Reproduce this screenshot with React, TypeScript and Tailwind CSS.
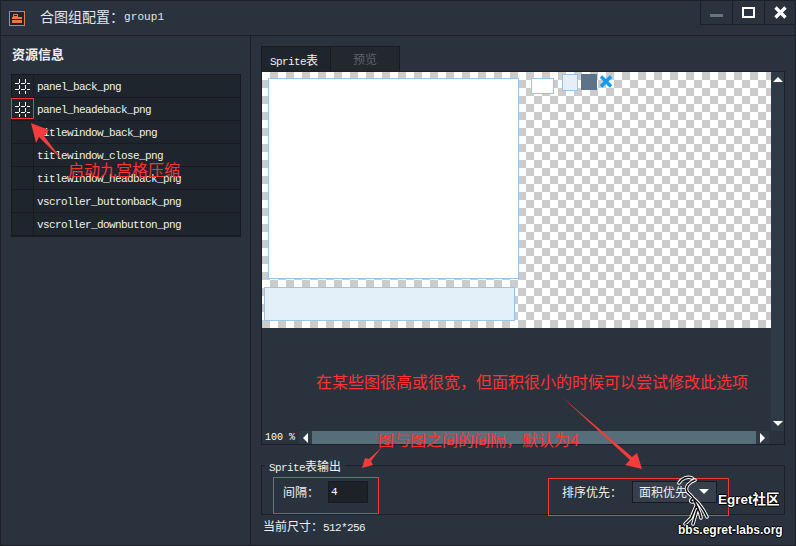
const mono = "font-['Liberation_Mono','Noto_Sans_CJK_SC',monospace]";
const cjk = "font-['Noto_Sans_CJK_SC','Liberation_Sans',sans-serif]";

const rows = [
  { name: "panel_back_png", grid: true },
  { name: "panel_headeback_png", grid: true },
  { name: "titlewindow_back_png" },
  { name: "titlewindow_close_png" },
  { name: "titlewindow_headback_png" },
  { name: "vscroller_buttonback_png" },
  { name: "vscroller_downbutton_png" },
];

function GridIcon() {
  return (
    <svg width="15" height="15" viewBox="0 0 15 15" stroke="#fff" strokeWidth="1" fill="none" shapeRendering="crispEdges">
      <path d="M0 4.5H3.5M5.5 4.5H9.5M11.5 4.5H15M0 10.5H3.5M5.5 10.5H9.5M11.5 10.5H15M4.5 0V3.5M4.5 5.5V9.5M4.5 11.5V15M10.5 0V3.5M10.5 5.5V9.5M10.5 11.5V15" />
    </svg>
  );
}

function AssetRow({ name, grid }: { name: string; grid?: boolean }) {
  return (
    <div className="flex h-[23px] border-b border-[#171b21] bg-[#1f252d]">
      <div className="w-[22px] border-r border-[#171b21] flex items-center justify-center shrink-0">
        {grid && <GridIcon />}
      </div>
      <div className={`${mono} pl-[3px] text-[11px] tracking-[-0.6px] leading-[24px] text-[#f0f0f0]`}>{name}</div>
    </div>
  );
}

function TitleBar() {
  return (
    <div className="h-[35px] flex border-b border-[#1b2027] shrink-0">
      <div className="shrink-0 ml-[8px] mt-[10px]">
        <svg width="16" height="15" viewBox="0 0 16 15" fill="none">
          <rect x="0.5" y="0.5" width="15" height="14" stroke="#e8793f" fill="#1d2430" />
          <path d="M4 3H9V6H13V12H3V6H4Z" fill="#e8793f" />
          <rect x="5" y="4" width="3" height="1" fill="#1d2430" />
          <rect x="3" y="8" width="10" height="1" fill="#1d2430" />
        </svg>
      </div>
      <div className={`${cjk} ml-[15px] mt-[6px] text-[14px] leading-[18px] text-[#e4e6e8]`}>合图组配置：</div>
      <div className={`${mono} mt-[7px] text-[11px] tracking-[0.1px] leading-[18px] text-[#e4e6e8]`}>group1</div>
      <div className="ml-auto flex h-[24px]">
        <div className="w-[33px] border border-t-0 border-[#1b2027] flex items-center justify-center">
          <div className="w-[13px] h-[3px] mt-[5px] bg-[#6a727b]" />
        </div>
        <div className="w-[32px] border-b border-r border-[#1b2027] flex items-center justify-center">
          <div className="w-[13px] h-[11px] border-2 border-white" />
        </div>
        <div className="w-[30px] border-b border-[#1b2027] flex items-center justify-center">
          <svg width="13" height="13" viewBox="0 0 13 13" stroke="#fff" strokeWidth="3.2">
            <path d="M1.5 1.5L11.5 11.5M11.5 1.5L1.5 11.5" />
          </svg>
        </div>
      </div>
    </div>
  );
}

function LeftPanel() {
  return (
    <div className="w-[250px] shrink-0 border-r border-[#1b2027] pl-[10px] pr-[9px]">
      <div className={`${cjk} mt-[9px] ml-[1px] h-[29px] text-[13px] font-bold leading-[18px] text-[#f0f0f0]`}>资源信息</div>
      <div className="border border-[#171b21]">
        {rows.map((r) => (
          <AssetRow key={r.name} name={r.name} grid={r.grid} />
        ))}
      </div>
    </div>
  );
}

function SpriteCanvas() {
  return (
    <div className="relative h-[256px] bg-[#fff] bg-[repeating-conic-gradient(#cccccc_0_25%,#ffffff_0_50%)] bg-[length:16px_16px] overflow-hidden">
      <div className="absolute left-[6px] top-[6px] w-[251px] h-[201px] bg-white border border-[#9cc3e5]" />
      <div className="absolute left-[2px] top-[215px] w-[251px] h-[34px] bg-[#e3eff9] border border-[#9cc3e5]" />
      <div className="absolute left-[269px] top-[6px] w-[23px] h-[16px] bg-white border border-[#9cc3e5]" />
      <div className="absolute left-[300px] top-[2px] w-[16px] h-[17px] bg-[#e3eff9] border border-[#9cc3e5]" />
      <div className="absolute left-[319px] top-[2px] w-[16px] h-[16px] bg-[#5d7389]" />
      <svg className="absolute left-[337px] top-[3px]" width="14" height="13" viewBox="0 0 14 13" stroke="#0f9bf5" strokeWidth="3.4">
        <path d="M2 1.5L12 11.5M12 1.5L2 11.5" />
      </svg>
    </div>
  );
}

function SpriteLabel({ suffix }: { suffix: string }) {
  return (
    <>
      <span className={`${mono} text-[11px] tracking-[-0.6px]`}>Sprite</span>
      <span className={`${cjk} text-[12px]`}>{suffix}</span>
    </>
  );
}

function RightPanel() {
  return (
    <div className="flex-1 pl-[10px] pr-[10px]">
      <div className="mt-[10px] flex h-[25px]">
        <div className="w-[70px] pl-[8px] bg-[#1f252d] border border-b-0 border-[#171b21] leading-[24px] text-[#f0f0f0]">
          <SpriteLabel suffix="表" />
        </div>
        <div className={`${cjk} w-[69px] bg-[#23282f] border-t border-r border-[#171b21] text-[12px] leading-[24px] text-center text-[#5e6368]`}>预览</div>
      </div>
      <div className="w-[524px] h-[374px] border border-[#1b2027] flex flex-col">
        <div className="flex flex-1">
          <div className="w-[509px]">
            <SpriteCanvas />
          </div>
          <div className="w-[13px] bg-[#2e3a45] flex flex-col justify-between items-center py-[5px]">
            <div className="w-0 h-0 border-x-[5px] border-x-transparent border-b-[5px] border-b-white" />
            <div className="w-0 h-0 border-x-[5px] border-x-transparent border-t-[5px] border-t-white" />
          </div>
        </div>
        <div className="h-[13px] flex items-center">
          <div className={`${mono} w-[37px] pl-[3px] text-[10px] leading-[13px] text-white`}>100 %</div>
          <div className="w-[13px] h-full bg-[#2e3a45] flex items-center justify-center">
            <div className="w-0 h-0 border-y-[5px] border-y-transparent border-r-[5px] border-r-white" />
          </div>
          <div className="w-[444px] h-full bg-[#566d7a]" />
          <div className="w-[13px] h-full bg-[#2e3a45] flex items-center justify-center">
            <div className="w-0 h-0 border-y-[5px] border-y-transparent border-l-[5px] border-l-white" />
          </div>
        </div>
      </div>
      <div className="relative mt-[20px] w-[524px] h-[50px] border border-[#1b2027] flex items-center justify-between">
        <div className="absolute left-[3px] top-[-9px] bg-[#2a323d] px-[4px] leading-[16px] text-[#f0f0f0]">
          <SpriteLabel suffix="表输出" />
        </div>
        <div className="flex items-center ml-[21px] mt-[3px]">
          <div className={`${cjk} w-[45px] text-[12px] text-[#f0f0f0]`}>间隔：</div>
          <div className={`${mono} w-[40px] h-[22px] bg-[#1d2229] border border-[#171b21] pl-[2px] text-[11px] leading-[20px] text-white`}>4</div>
        </div>
        <div className="flex items-center mr-[67px] mt-[3px]">
          <div className={`${cjk} w-[70px] text-[12px] text-[#f0f0f0]`}>排序优先：</div>
          <div className="w-[85px] h-[22px] bg-[#363f4b] border border-[#171b21] pl-[6px] pr-[7px] flex items-center justify-between">
            <span className={`${cjk} text-[12px] text-[#f0f0f0]`}>面积优先</span>
            <div className="w-0 h-0 border-x-[5px] border-x-transparent border-t-[5px] border-t-white" />
          </div>
        </div>
      </div>
      <div className={`${cjk} mt-[3px] ml-[2px] text-[12px] leading-[16px] text-[#f0f0f0]`}>
        当前尺寸：<span className={`${mono} text-[11px] tracking-[-0.6px]`}>512*256</span>
      </div>
    </div>
  );
}

const birdPath =
  "M16 4C12 2 6 4 3 9M19 6C13 8 9 13 11 17C12 20 16 21 17 24C14 26 14 28 17 28M17 24C22 28 26 32 31 43M18 26C20 32 24 36 25 44M20 32L15 44L9 50M21 36L17 50";

function Annotations() {
  return (
    <div className="absolute left-[-1px] top-[-1px] w-[796px] h-[546px] pointer-events-none">
      <svg className="absolute left-0 top-0" width="796" height="546" viewBox="0 0 796 546" fill="none">
        <rect x="11.5" y="98.5" width="22" height="20" stroke="#f03a36" />
        <rect x="273.5" y="477.5" width="105" height="36" stroke="#f03a36" />
        <rect x="548.5" y="478.5" width="180" height="37" stroke="#f03a36" />
        <polygon points="31,123 49,130 44,136 63,161 39,137 36,143" fill="#f53b3b" />
        <polygon points="382,447 371,461 373,465 362,468 365,458 369,459" fill="#f53b3b" />
        <polygon points="562,397 632,457 637,453 642,469 625,465 630,460" fill="#f53b3b" />
      </svg>
      <div className={`${cjk} absolute left-[68px] top-[159px] text-[16px] leading-[20px] text-[#ff3333]`}>启动九宫格压缩</div>
      <div className={`${cjk} absolute left-[316px] top-[371px] text-[16px] leading-[20px] text-[#ff3333]`}>在某些图很高或很宽，但面积很小的时候可以尝试修改此选项</div>
      <div className={`${cjk} absolute left-[378px] top-[429px] text-[16px] leading-[20px] text-[#ff3333]`}>图与图之间的间隔，默认为4</div>
      <svg className="absolute left-[676px] top-[474px]" width="40" height="54" viewBox="0 0 40 54" fill="none" strokeLinecap="round">
        <path d={birdPath} stroke="#fff" strokeWidth="3.5" />
        <path d={birdPath} stroke="#111" strokeWidth="1.6" />
      </svg>
      <div className="absolute left-[718px] top-[491px] font-['Liberation_Sans','Noto_Sans_CJK_SC',sans-serif] text-[13.5px] font-bold leading-[18px] text-white [text-shadow:1px_0_0_#000,-1px_0_0_#000,0_1px_0_#000,0_-1px_0_#000]">Egret社区</div>
      <div className="absolute left-[678px] top-[522px] font-['Liberation_Sans',sans-serif] text-[12px] font-bold leading-[16px] text-white [text-shadow:1px_0_0_#000,-1px_0_0_#000,0_1px_0_#000,0_-1px_0_#000]">bbs.egret-labs.org</div>
    </div>
  );
}

export default function App() {
  return (
    <div className="relative w-[796px] h-[546px] overflow-hidden bg-[#2a323d] border border-[#1b2027] flex flex-col">
      <TitleBar />
      <div className="flex flex-1">
        <LeftPanel />
        <RightPanel />
      </div>
      <Annotations />
    </div>
  );
}
